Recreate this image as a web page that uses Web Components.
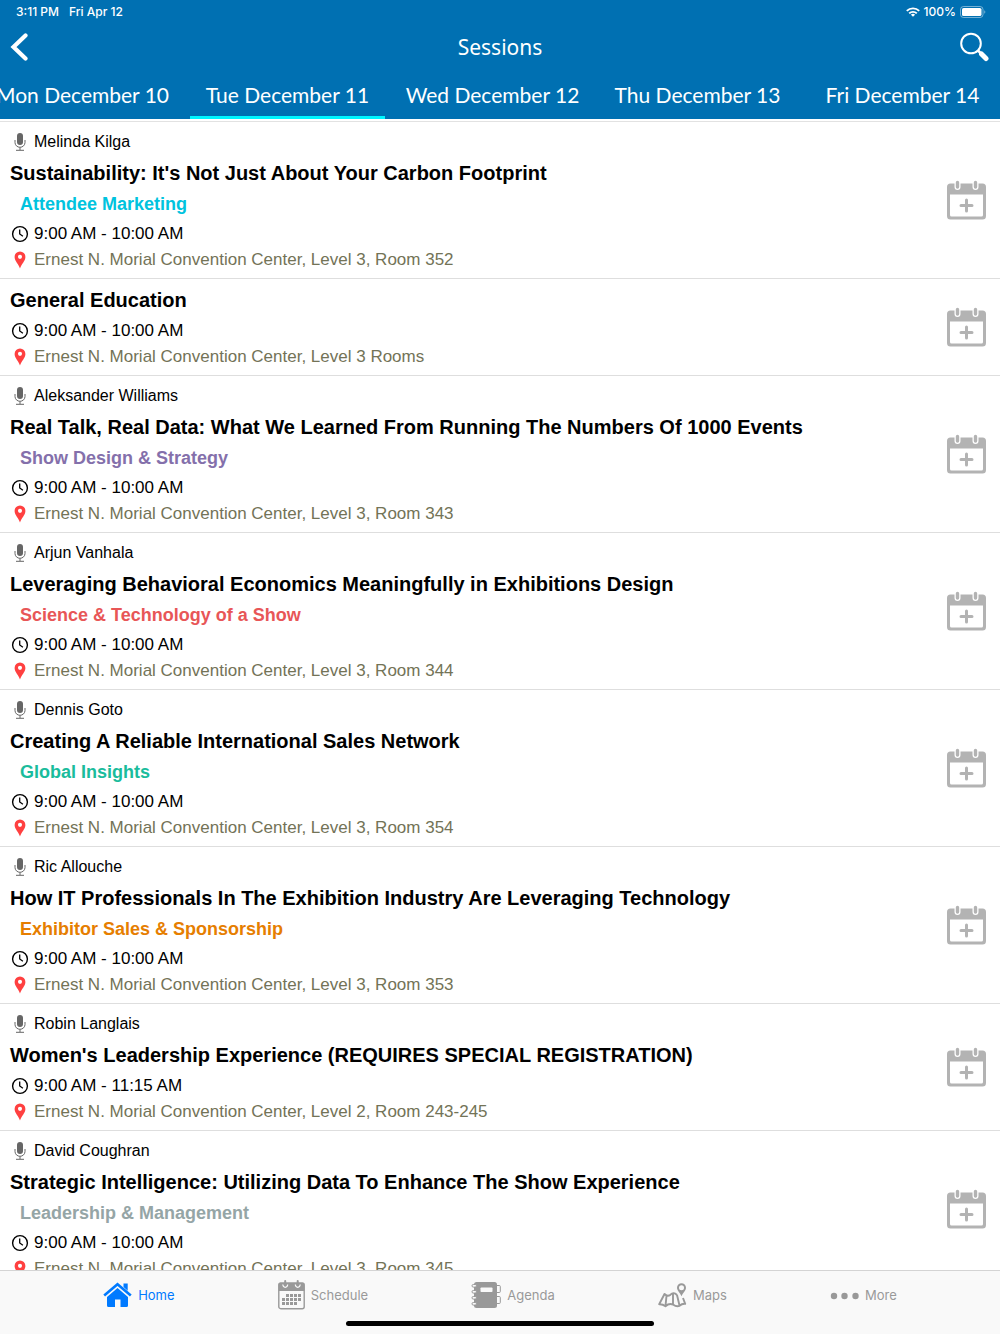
<!DOCTYPE html>
<html lang="en">
<head>
<meta charset="utf-8">
<meta name="viewport" content="width=device-width, initial-scale=1">
<title>Sessions</title>
<style>
    html, body {
        margin: 0;
        height: 100%;
    }

    body {
        font-family: "Liberation Sans", Arial, sans-serif;
        background: #fff;
        color: #000;
    }
</style>
</head>
<body>
<sessions-app>
    <status-bar slot="header"></status-bar>
    <nav-bar slot="header">Sessions</nav-bar>
    <day-tabs slot="header"></day-tabs>
    <session-list></session-list>
    <tab-bar slot="footer">
        <tab-item icon="home" active>Home</tab-item>
        <tab-item icon="schedule">Schedule</tab-item>
        <tab-item icon="agenda">Agenda</tab-item>
        <tab-item icon="maps">Maps</tab-item>
        <tab-item icon="more">More</tab-item>
    </tab-bar>
</sessions-app>

<script>
const sessions = [
    { speaker: 'Melinda Kilga', title: "Sustainability: It's Not Just About Your Carbon Footprint", track: 'Attendee Marketing', color: '#00c3de', time: '9:00 AM - 10:00 AM', place: 'Level 3, Room 352' },
    { title: 'General Education', time: '9:00 AM - 10:00 AM', place: 'Level 3 Rooms' },
    { speaker: 'Aleksander Williams', title: 'Real Talk, Real Data: What We Learned From Running The Numbers Of 1000 Events', track: 'Show Design & Strategy', color: '#8470ab', time: '9:00 AM - 10:00 AM', place: 'Level 3, Room 343' },
    { speaker: 'Arjun Vanhala', title: 'Leveraging Behavioral Economics Meaningfully in Exhibitions Design', track: 'Science & Technology of a Show', color: '#e85657', time: '9:00 AM - 10:00 AM', place: 'Level 3, Room 344' },
    { speaker: 'Dennis Goto', title: 'Creating A Reliable International Sales Network', track: 'Global Insights', color: '#1abc9c', time: '9:00 AM - 10:00 AM', place: 'Level 3, Room 354' },
    { speaker: 'Ric Allouche', title: 'How IT Professionals In The Exhibition Industry Are Leveraging Technology', track: 'Exhibitor Sales & Sponsorship', color: '#e67e00', time: '9:00 AM - 10:00 AM', place: 'Level 3, Room 353' },
    { speaker: 'Robin Langlais', title: "Women's Leadership Experience (REQUIRES SPECIAL REGISTRATION)", time: '9:00 AM - 11:15 AM', place: 'Level 2, Room 243-245' },
    { speaker: 'David Coughran', title: 'Strategic Intelligence: Utilizing Data To Enhance The Show Experience', track: 'Leadership & Management', color: '#95a5a6', time: '9:00 AM - 10:00 AM', place: 'Level 3, Room 345' },
];

// [width, height, markup], all of them drawn with currentColor
const icons = {
    back: [18, 30, '<path d="M15.5 3.5 3.5 15l12 11.500" fill="none" stroke="currentColor" stroke-width="4.2" stroke-linecap="round"/>'],
    search: [30, 30, '<circle cx="11" cy="11.500" r="9.8" fill="none" stroke="currentColor" stroke-width="2"/><path d="m18 18.500 3 3" stroke="currentColor" stroke-width="2.5"/><path d="m21.5 22 4.500 4.500" stroke="currentColor" stroke-width="5" stroke-linecap="round"/>'],
    wifi: [14, 10, '<g fill="none" stroke="currentColor" stroke-width="1.9"><path d="M.8 3.9a8.800 8.800 0 0 1 12.4 0"/><path d="M3.2 6.4a5.400 5.400 0 0 1 7.6 0"/></g><path d="M7 9.8 4.9 7.7a3 3 0 0 1 4.2 0z" fill="currentColor"/>'],
    battery: [26, 12, '<rect x=".5" y=".5" width="22.5" height="11" rx="3" fill="none" stroke="currentColor" stroke-opacity=".45"/><rect x="2" y="2" width="19.5" height="8" rx="1.6" fill="currentColor"/><path d="M24.3 4.2v3.600q1-.6 1-1.800t-1-1.800" fill="currentColor" fill-opacity=".5"/>'],
    mic: [12, 18, '<rect x="3" width="6" height="12" rx="3" fill="currentColor"/><path d="M1 7v2.500a5 4.800 0 0 0 10 0V7M6 14.500V17M2 17.300h8" fill="none" stroke="currentColor" stroke-width="1"/>'],
    clock: [18, 18, '<g fill="none" stroke="currentColor"><circle cx="9" cy="9" r="7.4" stroke-width="1.4"/><path d="M8.700 4.500V9l3.200 2.200" stroke-width="1.3"/></g>'],
    pin: [12, 18, '<path d="M6 .5a5.400 5.400 0 0 0-5.400 5.400C.6 10 4.800 13 6 17.500 7.200 13 11.400 10 11.400 5.900A5.400 5.400 0 0 0 6 .5zm0 3.300a2 2 0 1 1 0 4.100 2 2 0 0 1 0-4.100z" fill="currentColor" fill-rule="evenodd"/>'],
    calendarAdd: [39, 40, '<path d="M3.500 3.500h32A3.500 3.500 0 0 1 39 7v29a3.500 3.500 0 0 1-3.500 3.500h-32A3.500 3.500 0 0 1 0 36V7a3.500 3.500 0 0 1 3.500-3.500zM3 14.500V35q0 1.500 1.500 1.500h30q1.500 0 1.500-1.500V14.500z" fill="currentColor" fill-rule="evenodd"/><g stroke-linecap="round"><path d="M10.500 2.500V7M28.500 2.500V7" stroke="#fff" stroke-width="6"/><path d="M10.500 2.500v4.500M28.500 2.500v4.500" stroke="currentColor" stroke-width="3.4"/><path d="M19.500 20v11M14 25.500h11" stroke="currentColor" stroke-width="3"/></g>'],
    home: [29, 26, '<path d="M20.500 1.500h4.200v7.200l-4.200-3.600z" fill="currentColor"/><path d="M1.200 13.500 14.500 2.200l13.300 11.300" fill="none" stroke="currentColor" stroke-width="2.6"/><path d="M14.500 6 25 14.900v8.600q0 1.500-1.500 1.500h-6v-7.500h-5.500V25h-6.500Q4 25 4 23.500v-8.600z" fill="currentColor"/>'],
    schedule: [27, 30, '<rect x=".8" y="3.300" width="25.400" height="25.400" rx="2" fill="none" stroke="currentColor" stroke-width="1.4"/><path d="M2 2.600h23q1.500 0 1.500 1.500V11H.5V4.100Q.5 2.600 2 2.600z" fill="currentColor"/><g fill="none"><path d="M5 4.500a2.300 2.300 0 1 0 4.500 0M17.500 4.500a2.300 2.300 0 1 0 4.500 0" stroke="#f9f9f9" stroke-width="1.3"/><path d="M7.200 1v4M19.700 1v4" stroke="currentColor" stroke-width="2" stroke-linecap="round"/></g><path d="M8 14h3v3H8zm4 0h3v3h-3zm4 0h3v3h-3zm4 0h3v3h-3zM4 18h3v3H4zm4 0h3v3H8zm4 0h3v3h-3zm4 0h3v3h-3zm4 0h3v3h-3zM4 22h3v3H4zm4 0h3v3H8zm4 0h3v3h-3zm4 0h3v3h-3z" fill="currentColor"/>'],
    agenda: [30, 28, '<rect x="3" y="1" width="23" height="26" rx="2.5" fill="currentColor"/><rect x="9.500" y="6.500" width="12" height="4.500" rx=".8" fill="#f9f9f9"/><g stroke="currentColor" fill="#f9f9f9"><rect x="1" y="3.500" width="4.500" height="2.600" rx="1.3"/><rect x="1" y="9.500" width="4.500" height="2.600" rx="1.3"/><rect x="1" y="15.500" width="4.500" height="2.600" rx="1.3"/><rect x="1" y="21.500" width="4.500" height="2.600" rx="1.3"/><path d="M26 4.500h2.300q1 0 1 1v5q0 1-1 1H26M26 15.500h2.300q1 0 1 1v5q0 1-1 1H26" fill="none"/></g>'],
    maps: [29, 26, '<path d="M23.500 1.200a4.500 4.500 0 0 0-4.500 4.500c0 3 3 5 4.500 8.500 1.500-3.500 4.500-5.500 4.500-8.500a4.500 4.500 0 0 0-4.500-4.500zm0 2a2.500 2.500 0 1 1 0 5 2.500 2.500 0 0 1 0-5z" fill="currentColor" fill-rule="evenodd"/><path d="M19 13q-3.500-3.500-6.500-.3-3 2.500-6-.7L1.200 22.200q3.500-.2 6.300 2 3.500-3.200 7.500-1.700 3.500 2.500 6.500 1.300 2.500-2.300 5.700-2l-2.200-5.800M8.500 13.800l-1 10M15 11.800v10.400M19 13l2.500 10.500" fill="none" stroke="currentColor" stroke-width="1.9" stroke-linejoin="round"/>'],
    more: [29, 26, '<g fill="currentColor"><circle cx="4" cy="14" r="3.2"/><circle cx="14.500" cy="14" r="3.2"/><circle cx="25.500" cy="14" r="3.2"/></g>'],
};

class AppIcon extends HTMLElement {
    connectedCallback() {
        const [w, h, markup] = icons[this.getAttribute('name')];
        this.attachShadow({ mode: 'open' }).innerHTML = `
            <style>
                :host {
                    display: inline-flex;
                    flex: none;
                }

                svg {
                    display: block;
                }
            </style>
            <svg width="${w}" height="${h}" viewBox="0 0 ${w} ${h}" aria-hidden="true">${markup}</svg>
        `;
    }
}

class StatusBar extends HTMLElement {
    constructor() {
        super();
        this.attachShadow({ mode: 'open' }).innerHTML = `
            <style>
                :host {
                    display: flex;
                    justify-content: space-between;
                    height: 24px;
                    padding: 0 14px 0 16px;
                    font: 500 12px/24px Inter, sans-serif;
                }

                div {
                    display: flex;
                    align-items: center;
                }

                .clock {
                    gap: 10px;
                }

                .power {
                    gap: 4px;
                }
            </style>
            <div class="clock"><span>3:11 PM</span><span>Fri Apr 12</span></div>
            <div class="power">
                <app-icon name="wifi"></app-icon>
                <span>100%</span>
                <app-icon name="battery"></app-icon>
            </div>
        `;
    }
}

class NavBar extends HTMLElement {
    constructor() {
        super();
        this.attachShadow({ mode: 'open' }).innerHTML = `
            <style>
                :host {
                    display: grid;
                    grid-template-columns: 1fr auto 1fr;
                    align-items: center;
                    height: 46px;
                    padding: 0 10px;
                }

                h1 {
                    margin: 0;
                    font: 400 21px/24px "Noto Sans", sans-serif;
                }

                button {
                    display: flex;
                    padding: 0;
                    border: 0;
                    background: none;
                    color: inherit;
                    justify-self: start;
                }

                button:last-child {
                    justify-self: end;
                }
            </style>
            <button aria-label="Back"><app-icon name="back"></app-icon></button>
            <h1><slot></slot></h1>
            <button aria-label="Search"><app-icon name="search"></app-icon></button>
        `;
    }
}

class DayTabs extends HTMLElement {
    constructor() {
        super();
        const days = ['Mon December 10', 'Tue December 11', 'Wed December 12', 'Thu December 13', 'Fri December 14'];
        this.attachShadow({ mode: 'open' }).innerHTML = `
            <style>
                :host {
                    display: flex;
                    height: 49px;
                    overflow-x: auto;
                    scrollbar-width: none;
                }

                button {
                    flex: 1 0 195px;
                    margin: 0 5px;
                    padding: 3px 0 0;
                    border: 0;
                    border-bottom: 3px solid transparent;
                    background: none;
                    color: inherit;
                    font: 400 21px/24px Lato, sans-serif;
                    white-space: nowrap;
                }

                button[aria-selected="true"] {
                    border-color: #00f6ff;
                }
            </style>
            ${days.map((day, i) => `<button role="tab" aria-selected="${i === 1}">${day}</button>`).join('')}
        `;
    }

    connectedCallback() {
        this.setAttribute('role', 'tablist');
        this.scrollLeft = 20;
    }
}

class SessionRow extends HTMLElement {
    set session(s) {
        this.attachShadow({ mode: 'open' }).innerHTML = `
            <style>
                :host {
                    display: flex;
                    align-items: center;
                    justify-content: space-between;
                    padding: 0 14px 0 10px;
                    border-bottom: 1px solid #dedede;
                }

                .details {
                    padding: 5px 0 7px;
                }

                .line {
                    display: grid;
                    grid-template-columns: 20px 1fr;
                    column-gap: 4px;
                    align-items: center;
                    justify-items: center;
                }

                .line span {
                    justify-self: start;
                }

                .speaker {
                    font-size: 16px;
                    line-height: 30px;
                }

                .speaker app-icon {
                    color: #666;
                }

                h2 {
                    margin: 0;
                    font-size: 20px;
                    line-height: 32px;
                }

                .track {
                    padding-left: 10px;
                    font-size: 18px;
                    font-weight: bold;
                    line-height: 30px;
                }

                .time {
                    font-size: 17px;
                    line-height: 30px;
                }

                .place {
                    color: #737357;
                    font-size: 17px;
                    line-height: 22px;
                }

                .place app-icon {
                    color: #ff4040;
                }

                button {
                    display: flex;
                    padding: 0;
                    border: 0;
                    background: none;
                    color: #b3b3b3;
                }
            </style>
            <div class="details">
                ${s.speaker ? `<div class="line speaker"><app-icon name="mic"></app-icon><span>${s.speaker}</span></div>` : ''}
                <h2>${s.title}</h2>
                ${s.track ? `<div class="track" style="color: ${s.color}">${s.track.replace('&', '&amp;')}</div>` : ''}
                <div class="line time"><app-icon name="clock"></app-icon><span>${s.time}</span></div>
                <div class="line place"><app-icon name="pin"></app-icon><span>Ernest N. Morial Convention Center, ${s.place}</span></div>
            </div>
            <button aria-label="Add to schedule"><app-icon name="calendarAdd"></app-icon></button>
        `;
    }
}

class SessionList extends HTMLElement {
    connectedCallback() {
        this.attachShadow({ mode: 'open' }).innerHTML = `
            <style>
                :host {
                    display: block;
                    padding-top: 2px;
                }

                .rows {
                    border-top: 1px solid #e2e2e2;
                }
            </style>
            <div class="rows"></div>
        `;
        const rows = this.shadowRoot.querySelector('.rows');
        for (const session of sessions) {
            const row = document.createElement('session-row');
            row.session = session;
            rows.append(row);
        }
    }
}

class TabItem extends HTMLElement {
    connectedCallback() {
        this.attachShadow({ mode: 'open' }).innerHTML = `
            <style>
                :host {
                    display: block;
                    color: #999;
                }

                :host([active]) {
                    color: #007aff;
                }

                a {
                    display: flex;
                    align-items: center;
                    gap: 6px;
                    height: 30px;
                    color: inherit;
                    font: 400 13px/20px Inter, sans-serif;
                    text-decoration: none;
                }
            </style>
            <a href="#${this.getAttribute('icon')}"><app-icon name="${this.getAttribute('icon')}"></app-icon><slot></slot></a>
        `;
    }
}

class TabBar extends HTMLElement {
    constructor() {
        super();
        this.attachShadow({ mode: 'open' }).innerHTML = `
            <style>
                :host {
                    display: block;
                    padding: 9px 0 8px;
                    border-top: 1px solid #d4d4d4;
                    background: #f9f9f9;
                }

                nav {
                    display: flex;
                    justify-content: space-evenly;
                }

                .home-indicator {
                    width: 308px;
                    height: 5px;
                    margin: 11px auto 0;
                    border-radius: 3px;
                    background: #000;
                }
            </style>
            <nav><slot></slot></nav>
            <div class="home-indicator"></div>
        `;
    }
}

class SessionsApp extends HTMLElement {
    constructor() {
        super();
        this.attachShadow({ mode: 'open' }).innerHTML = `
            <style>
                :host {
                    display: flex;
                    flex-direction: column;
                    height: 100vh;
                }

                header {
                    flex-shrink: 0;
                    background: #0070b2;
                    color: #fff;
                }

                main {
                    flex: 1;
                    min-height: 0;
                    overflow-y: auto;
                    scrollbar-width: none;
                }
            </style>
            <header><slot name="header"></slot></header>
            <main><slot></slot></main>
            <footer><slot name="footer"></slot></footer>
        `;
    }
}

customElements.define('app-icon', AppIcon);
customElements.define('status-bar', StatusBar);
customElements.define('nav-bar', NavBar);
customElements.define('day-tabs', DayTabs);
customElements.define('session-row', SessionRow);
customElements.define('session-list', SessionList);
customElements.define('tab-item', TabItem);
customElements.define('tab-bar', TabBar);
customElements.define('sessions-app', SessionsApp);
</script>
</body>
</html>
